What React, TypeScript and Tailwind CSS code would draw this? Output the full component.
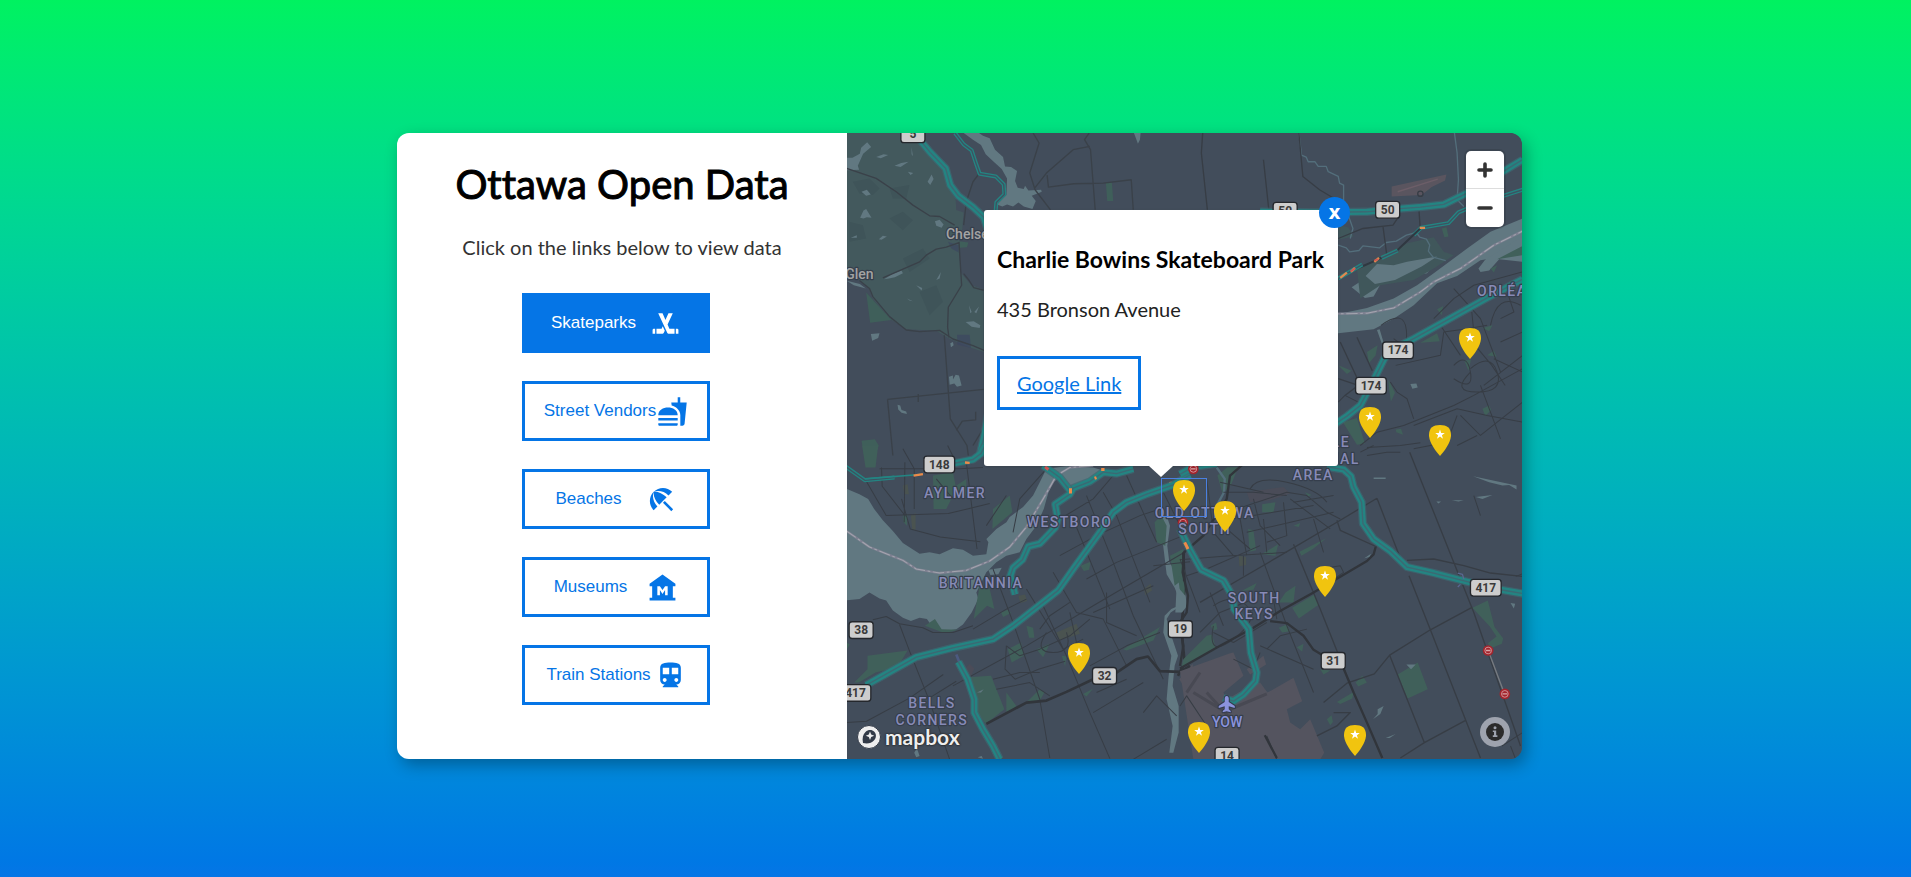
import { useState } from "react";
import type { ReactNode } from "react";
import type { IconType } from "react-icons";
import {
  MdBeachAccess,
  MdDirectionsTransit,
  MdFastfood,
  MdMuseum,
  MdSportsHockey,
} from "react-icons/md";

type Category = { name: string; Icon: IconType; gap: string };

const categories: Category[] = [
  { name: "Skateparks", Icon: MdSportsHockey, gap: "gap-3.5" },
  { name: "Street Vendors", Icon: MdFastfood, gap: "gap-px" },
  { name: "Beaches", Icon: MdBeachAccess, gap: "gap-6" },
  { name: "Museums", Icon: MdMuseum, gap: "gap-5" },
  { name: "Train Stations", Icon: MdDirectionsTransit, gap: "gap-1" },
];

// Pin positions on the map: horizontal centre and top edge.
const pins = [
  { x: 623, y: 194 },
  { x: 523, y: 273 },
  { x: 593, y: 291 },
  { x: 232, y: 509 },
  { x: 337, y: 346, selected: true },
  { x: 378, y: 367 },
  { x: 478, y: 432 },
  { x: 352, y: 588 },
  { x: 508, y: 591 },
];

const shields = [
  { x: 199, y: 4, t: "5" },
  { x: 1314, y: 233, t: "50" },
  { x: 1621, y: 230, t: "50" },
  { x: 1652, y: 651, t: "174" },
  { x: 1571, y: 757, t: "174" },
  { x: 278, y: 993, t: "148" },
  { x: 44, y: 1489, t: "38" },
  { x: 27, y: 1677, t: "417" },
  { x: 773, y: 1626, t: "32" },
  { x: 1000, y: 1486, t: "19" },
  { x: 1458, y: 1581, t: "31" },
  { x: 1915, y: 1362, t: "417" },
  { x: 1140, y: 1865, t: "14" },
];

const districts = [
  { x: 325, y: 1094, t: "AYLMER" },
  { x: 668, y: 1181, t: "WESTBORO" },
  { x: 403, y: 1364, t: "BRITANNIA" },
  { x: 256, y: 1723, t: "BELLS" },
  { x: 256, y: 1773, t: "CORNERS" },
  { x: 1073, y: 1152, t: "OLD OTTAWA" },
  { x: 1073, y: 1202, t: "SOUTH" },
  { x: 1221, y: 1407, t: "SOUTH" },
  { x: 1221, y: 1457, t: "KEYS" },
  { x: 1398, y: 940, t: "CYRVILLE" },
  { x: 1398, y: 990, t: "INDUSTRIAL" },
  { x: 1398, y: 1040, t: "AREA" },
  { x: 1996, y: 488, t: "ORLÉANS" },
];

const closures = [
  [1039, 1006],
  [1008, 1167],
  [1922, 1550],
  [1972, 1680],
];

function Highway({ d }: { d: string }) {
  return (
    <g>
      <path d={d} stroke="#3d6872" strokeWidth="25" opacity="0.7" />
      <path d={d} stroke="#248482" strokeWidth="18" />
      <path d={d} stroke="#3c6973" strokeWidth="4" />
    </g>
  );
}

function Parkway({ d }: { d: string }) {
  return (
    <g>
      <path d={d} stroke="#248482" strokeWidth="12" />
      <path d={d} stroke="#3d5361" strokeWidth="4" />
    </g>
  );
}

function CityMap() {
  return (
    <svg
      viewBox="0 0 2025 1875"
      preserveAspectRatio="xMidYMid slice"
      className="absolute inset-0 size-full"
      role="img"
      aria-label="Map of Ottawa"
      fill="none"
      strokeLinejoin="round"
    >
      <rect width="2025" height="1875" fill="#424d5b" />

      {/* North-west: hills and lakes */}
      <g transform="translate(-21 -24)">
        <path
          fill="#43595d"
          d="M21 24H240L262 70 318 130 335 200 348 222 350 255 372 262 368 310 358 350 362 440 395 480 432 492V680L385 664 330 640 290 616 200 612 150 580 100 520 88 490 60 466 21 450Z"
        />
        <path
          fill="#3f5459"
          d="M40 170l50-10 30 30-20 20-40-5zM150 280l40-20 30 25-30 30zM30 290l40 10 10 40-50 10zM190 400l60-30 20 30-60 40zM240 500l50-20 20 50-40 40zM150 190l60-10-10 40-40 0z"
        />
        <path fill="#3f5f5a" d="M80 502L155 584 92 592ZM66 946l40-5 12 20-12 29H74zM358 348l28 4-4 14-22 2zM798 172h18l4 56h-18z" />
        <path fill="#3c4560" d="M352 628h38l4 40-40-10zM325 350l32 10v22l-22-12z" opacity="0.6" />
        <path
          fill="#617881"
          d="M21 98l18 0 22-12 4-18 18-16 12 14-24 20-8 18-8 18 4 12-38 2zM110 96l22-8 14 2-22 10zM165 122l20-8 22-4-24 16zM205 140l16 4-8 6zM264 170l12-22 6 14-10 18zM216 66l4 28-4-6zM66 200l16-6 12 14-14 4zM62 278l10-22 8-4 16 26-14-2-10 4zM286 288l14-4 12 14-6 10-16-6zM34 338l18-8 0 8zM118 342l12-10 12 2-16 10zM134 462l24-16 28-10 4 8-24 12-18 4zM290 464l14-24-4 20zM230 480l18 8-2 8zM202 520l18 8-10-2zM21 466l40 10 18 14-36-10zM94 626l26-2-4 14-18 8zM332 654l8-4 2 10-8 6zM328 754l12-4 0 12 8-14 10 2 8 30-14 4-8-10-14 4zM174 838l8 2 4 14 14 4 2 8-16-4-10-10zM378 590l24-2 20 12-2 8-24-4zM388 540l8 20-4 4zM404 560l14-16-8 20z"
        />
        <path
          fill="#617881"
          d="M372 24L400 44 424 60 438 88 462 110 486 132 502 160 500 210 472 238 488 244 502 238 520 244 536 232 552 244 578 252 588 228 576 212 606 200 604 194 566 196 556 182 552 192 534 188 526 168 532 138 514 126 496 124 490 96 466 74 450 40 430 32 418 24ZM882 24h20l-2 20-6 12-6-16z"
        />
        <g stroke="#3a4149" strokeWidth="4">
          <path d="M21 130L110 160 170 200 220 240 270 272 300 274 345 300M358 352L320 366 290 372 260 390 240 410 130 458M358 350l8 130-40 66-2 60 4 30M314 630l10 140 8 110 50 80 4 30M144 822L432 792M144 822l16 168M236 806v24M372 300l8-70 20-60 18-24M372 445l16 20 14 22 30 8M60 466l30 24 10 24 50 60 50 40 40 5 60-4 40 26 60 20 42 18M350 915l18-28 40-4 0-24M400 960l30-50" />
          <path d="M580 24l18 30-28 90 16 50 46 60M750 64l-50 10-80 70-36 46M622 150l4 36 76-10 88-2 84-10 6 90M748 24l-14 20 18 30 14 180" />
        </g>
        <Highway d="M240 44L272 82 318 130 332 180 356 212 400 246 432 276 446 320 446 860 434 930 420 990" />
        <Parkway d="M346 24L372 58 396 76 410 118 420 146 468 154 492 178 494 208 470 232 468 256" />
      </g>

      {/* North-east: river, Orléans */}
      <g transform="translate(999 -24)">
        <path
          fill="#617881"
          d="M440 590L474 566 560 548 640 520 710 480 760 444 860 370 930 320 1026 280V370L990 390 900 405 830 452 770 474 700 540 640 580 580 612 474 624 440 626ZM514 486l46-30 30-40 50 4 60-8 80-18-40 50-100 20-40 14-20 36-26 4z"
        />
        <path fill="#617881" d="M894 430l20-26 112-70v76l-70-8-30 34-26 4zM690 776l18-2 4 12-16 4zM590 614l8-2 12 40-6 2z" />
        <path fill="#40575b" d="M530 430L600 392 680 354 760 336 790 380 820 390 760 430 700 464 600 480 540 520ZM474 300l30 6 16 28-46 10z" />
        <path fill="#617881" d="M556 452l34-36 50 4 40-10 90-16-46 30-80 40-60 12z" />
        <path fill="#40605a" d="M720 652l50-28 8 24zM560 680l32-20-6 30-20 24zM488 890l42-12 24 76-24 4zM474 720l40 16-14 10zM626 790l-2-28 20 40-12 26zM920 690l20-14 8 18zM852 706l20-4-8 34zM906 608l30-8-10 18zM770 552l18-10-4 28zM646 912l16-2 6 18-20-8zM930 430l20-10-10 22zM950 402l76-40v28zM784 310l14-4 6 28-12 2zM906 850l20-10 6 14-18 18z" />
        <path fill="#5a555f" d="M634 184l164-36-4 18-40 20-30 24-90 4z" />
        <path stroke="#6c5e68" strokeWidth="4" d="M652 200l120-38" />
        <g stroke="#536e7b" strokeWidth="4">
          <path d="M356 24l8 66 14 6 6 14 20 0 10 14 24 0 6 16 30 14 4 20 12 6 0 50M474 360l24 8 10 12 28-4 12-14 50 6 20-16 30-4 30-18 30-8 10 14 20 6 10 18-4 18 14 18 38 10M474 260l30 10 14 40-8 30M822 24l8 60 4 80-4 60 20 20" />
        </g>
        <path d="M440 566L560 564 640 548 720 500 760 470 840 430 940 360 1026 318" stroke="#7e8091" strokeWidth="7" />
        <path d="M440 566L560 564 640 548 720 500 760 470 840 430 940 360 1026 318" stroke="#a3a5ae" strokeWidth="3" strokeDasharray="34 8 8 8" />
        <g stroke="#373d45" strokeWidth="4">
          <path d="M68 24l-4 60 18 170M250 104l16 150M356 24l12 130 50 40 50 30M474 340l74-30 90-10 20-30M608 304l12 90M716 258l4 60M480 650l70 150M530 636l46 100M474 760l60 20-40 30" />
          <path
            strokeWidth="3"
            d="M602 600q70-50 76 14T640 640M646 720L780 690 790 620 860 610 920 600M630 770l20 30 30 20 20 60M474 830l20-20 40 20M540 960l50-40 80-20 150-60 60-30 146-80M700 970l100-20 30-80M700 900l130-50 90 20 106 20M760 580l60-60 60-40 146-40M820 490l80 90 60 160M874 560l10 100 50 60 40 60M930 600q20-100 90-60M820 720q40-40 50 20t-50 20M870 730q60-50 80 10t-60 60-20-60M840 870l60 60 50-40 76-60M900 780l60 160M560 966l100-6 60-8M960 650l66-30M940 700l86 40M780 600l60 90M910 780l116-90M980 500l20 60-40 20"
          />
          <path d="M712 206a8 8 0 1 0 16 0 8 8 0 1 0-16 0" />
        </g>
        <Highway d="M240 260L400 262 560 260 640 252 720 246 790 238 860 204 910 174 960 144 1026 104" />
        <Parkway d="M700 330L722 308 804 294 834 262 900 234 1026 194" />
        <path d="M470 462L540 426 590 404 650 376 722 308" stroke="#303841" strokeWidth="6" />
        <Parkway d="M604 398L652 376" />
        <Parkway d="M474 460L546 418" />
        <path d="M480 458l20-16M512 440l12-12M582 410l14-12M718 308h16" stroke="#e08a50" strokeWidth="7" />
        <path d="M512 438l12-8M582 406l12-4" stroke="#d15555" strokeWidth="5" />
        <Highway d="M440 912L500 872 540 840 572 780 612 700 640 670 700 640 920 518 1026 462" />
      </g>

      {/* South-west: Aylmer, Britannia, Bells Corners */}
      <g transform="translate(-21 936)">
        <path
          fill="#617881"
          d="M21 130L60 146 86 160 104 190 130 224 160 256 190 292 240 324 270 320 300 326 340 308 370 312 400 330 440 326 446 290 440 280 470 250 500 230 510 214 550 184 580 150 600 110 620 70 680 62 760 66 800 78 780 92 740 112 716 128 694 132 660 96 640 110 626 140 612 190 590 240 560 280 540 320 500 330 470 350 440 380 410 440 416 460 396 500 370 536 350 550 310 556 280 546 262 520 240 516 214 526 190 516 160 494 140 464 120 458 90 440 60 460 21 464Z"
        />
        <path fill="#617881" d="M446 372l40-6-10 20-24 2zM960 220l20-10 10 30-8 60 6 50 20 30 30 60v30l-46 30-12 20 14 50 20 60-10 30-6 60 18 60v80l-16 60h-12l10-80-18-80 6-70 8-60-24-70 4-50 20-20 30-14-20-50-24-40z" />
        <path
          fill="#40605a"
          d="M68 0h48l-8 66H78zM280 90l60-10 10 50-30 60-38 0zM460 190l50-40 8 50-60 50zM190 210l14-4-2 34-10-10zM350 120l30-20 0 50-26-4zM84 630l120-16-30 50-66 16-50 30-14 0 40-40zM420 420l30 10 14 60-22-10-40 40zM384 694l70-4 40 100-56 44-36-50zM504 610l40-20 8 40-36 20zM590 610l40-16-20 40zM560 540l20 6 4 30-16 0zM484 500l20-8 10 10-24 12zM722 360l30-12-4 24-16 4zM850 610l110-66-20 40-80 30zM560 770l40-40 14 10-14 24zM666 630l14 2-4 30zM730 744l30-16-20 24zM944 230l20-20 16 30-4 60-26-10zM990 330l40-20v90l-26 20zM500 740l30 40-30 24zM256 540l30-20 20 30 50 2-40 10zM21 590l10 6-10 16z"
        />
        <path fill="#4a5350" d="M650 560l60-26 10 30-60 20zM190 120l14-4 4 30-14 0zM214 210l14-8 0 50-10 0zM536 450l20-4 6 20-20 6zM912 430l20-16 4 20-20 14z" />
        <path fill="#54545f" d="M1018 700l40-46v110z" />
        <path fill="#4b4c58" d="M374 670l16-16 14 14-10 24z" />
        <path fill="#617881" d="M412 740l20-10-8 10zM224 920l8-14 8 24-10 4zM414 934l12-4 4 8z" />
        <g stroke="#373d45" strokeWidth="3">
          <path d="M126 66l2 56 70 90M80 106l60 104 186-6 124-30M190 10l34 60 0 120M186 160l26 90 90 24 120 14M380 50l32 260M290 100l50 60M120 70l240 0 70-4M324 0l30 60M500 150l-60 90M196 50l-2 180" />
          <path d="M100 522L140 512 180 534 250 546 280 560 340 560 400 540M180 536l30 80 60 150 60 174M21 740l70-20M21 830l60-4 130-70 100-70M340 720L560 600 760 480 1050 310M400 550l100-60 60-30M460 370L520 530 600 760 630 936M500 600l40 30 60-20 90-40 60-50M610 480l70 150 70 170 60 138M690 470l-60 40-30 40M560 430l110 180 60-30M500 600l-4 70 30 30 70-30 80-24M640 380l70 120 80 20 30 60 40 80M700 220l110 270M740 150l80 200 60 160 90 190M790 140l40 70 100 260M860 90l90 200M660 220l100-60 60-70M660 330l110-60 130-60 60-20M740 400l90-50 200-80M760 500l180-80M750 660l110-60 100-40M770 740l90-40M760 800l100-60 50-30M910 800l40-50 60 60M460 700l80-20 60 0M880 940l100-60M270 756l80-50M470 730l100-20 60 40M940 360l110-12M960 120l90 180" />
          <path d="M620 560q-40 60 20 60t40-60M690 500l20 90M800 440l0 90 90 40M620 70l-80 90-20 100" />
        </g>
        <path d="M440 834L560 770 620 764 680 738 760 700 830 680 890 640 924 632 960 676 1020 678 1050 660M1030 320l4 110-10 120 10 100-20 40" stroke="#31353b" strokeWidth="8" />
        <path d="M21 256L90 304 190 344 230 370 300 382 380 374 450 346 510 304 560 244 610 160 650 90 690 66 760 60" stroke="#7e8091" strokeWidth="7" />
        <path d="M21 256L90 304 190 344 230 370 300 382 380 374 450 346 510 304 560 244 610 160 650 90 690 66 760 60" stroke="#a3a5ae" strokeWidth="3" strokeDasharray="34 8 8 8" />
        <Parkway d="M14 60L76 104 165 96" />
        <path d="M76 100L250 86" stroke="#248482" strokeWidth="5" />
        <Highway d="M340 54L400 42 424 24 436 0" />
        <path d="M222 90l28-4M376 51l14 1" stroke="#ed8a49" strokeWidth="7" />
        <Highway d="M526 446L512 390 520 366 548 342 566 302 600 294 646 246 654 220 646 176 690 146 700 128 750 108 790 80 830 84 880 70" />
        <Highway d="M610 60L660 96 690 134" />
        <path d="M616 64l10 8" stroke="#d15555" strokeWidth="9" />
        <path d="M692 128v16M764 98l6-2M784 72h10M778 266l12-16M988 114l10-2M1036 290l8 20" stroke="#ed8a49" strokeWidth="9" />
        <Highway d="M80 718L230 634 340 606 460 580 520 540 655 434 700 370 780 260 820 200 860 170 920 146 1000 118 1050 88" />
        <path d="M350 626l20 50" stroke="#4c5a80" strokeWidth="8" />
        <Highway d="M356 648L384 700 404 760 404 800 430 850 460 900 480 940" />
      </g>

      {/* South-east: South Keys, airport */}
      <g transform="translate(999 936)">
        <path fill="#54545f" d="M0 676L150 622 160 620 190 690 130 740 140 760 210 720 240 710 262 740 340 696 366 766 320 790 330 830 360 850 390 820 432 920 420 940H40ZM200 670l50-40 8 26-48 30z" />
        <path fill="#4a4c58" d="M200 140l110-16 20 20-60 20-60 6z" />
        <path
          fill="#40605a"
          d="M112 90l30-25 32 0-20 50-26 30zM246 176l40-6-6 30-34 0zM336 486l66-40 14 30-60 42zM358 318l80-40-40 32-34 20zM204 250l16 4 8 60-20 4zM244 326l50-30-8 34zM10 640l70-70 16-4 12 44-104 56zM652 686l60-36 30 80-60 28zM876 486l46-22 20 80 26 34-4 16-34 14-8-16 26-20-20-30zM470 768l50-30-4 20-36 16zM526 710l20-20 14 20-26 12zM440 820l14-12 4 20-8 10zM296 546l24-10 10 20-24 4zM350 604l20-10-4 24zM296 470l20-30 30-20-6 50zM184 436l46-24-10 20zM92 540l16-10 4 20-12 4zM340 240l20-8-4 12zM374 140l20 8-10 4zM420 670l30 4-20 12zM-6 390l20 20 0 50-14-20z"
        />
        <path fill="#4a5350" d="M176 330l22 4 0 24-20 4z" />
        <path fill="#617881" d="M-10 420l26 30 6 30-16 20-20 0zM580 96h36v4h-36zM878 92l130 28 0 12-22-14-20 2-40-10zM886 154l50-6-30 12zM814 164l36 0-16 4zM768 168h14l-8 6zM678 656l28 0-14 14zM578 820l14-16 0-14 18-10-10 24zM616 876l30-12-18 12zM990 472l14 2-4 14zM552 338l20-14-4 10z" />
        <path d="M110 66L134 100 132 140 110 180" stroke="#536e7b" strokeWidth="7" />
        <path d="M40 740L140 800M150 790l110-46M60 680l-40 60M80 740l100 110" stroke="#484953" strokeWidth="9" />
        <g stroke="#373d45" strokeWidth="3">
          <path
            strokeWidth="4"
            d="M590 158L480 224 300 330 180 400 60 470M590 158l70 180M688 20L760 200 880 500 1020 900M470 224l10 30 110 50M680 344l80-4 90 20 80 22 96 10M686 390L750 552 900 936M876 484L750 552 628 628 582 684 500 712 430 770M628 628L732 890 660 936M732 890L854 824M340 296L420 490 496 680M410 870l60-30 40-40-50 0"
          />
          <path d="M0 342L130 332 320 320M20 390l60-20 160-70M240 320L320 540 400 740M100 560l60 30 100-60M90 440l40 100M220 160l20 80 60 60M140 200l180-60 60 10 60 50 40 20M120 110l130 30M210 130q20-40 110-20t120 60M330 160l120 90M310 170l10 100-60 20M220 210l180-30M200 260l260-60M140 250l70 60M180 220l20 110M400 220l30 100M250 220l10 100M60 560l60-60 100-40M160 640l60 30 20-50M380 550l-80 20-40 40M0 340l60 160M280 460l10 60M460 150l-120 20M540 20l40-20M560 30l60-10 40 0M830 0l60-30M80 100l20 160 60 70M420 370l60-10 10 20-30 20M0 780l20-30 60 90M260 870l30 70M100 480q60-40 100 0T160 580t-60-40M880 150l20 60M1006 392l20-8M964 900l62-40M990 900l14 36" />
          <path d="M130 140l90 0 100 10M190 330l0 60M240 600l160 70" />
        </g>
        <path d="M0 668L120 600 220 546 300 496 400 440 560 346 580 326 586 304M270 526L320 532 370 570 400 612 420 624 490 668 520 740 560 830 606 936M150 90l46-40M150 88L140 160 70 270 12 320 8 380 24 450 20 500 0 530 10 600 0 660M254 868l36 68" stroke="#31353b" strokeWidth="7" />
        <Highway d="M440 64L490 72 512 92 520 124 544 170 548 234 580 280 630 316 680 364 760 382 860 408 960 432 1030 444" />
        <Highway d="M0 86L40 64 110 54" />
        <Highway d="M0 250L30 312 64 372 130 404 158 452 162 490 206 550 212 620 230 680 226 706 190 746 160 766 130 756" />
        <path d="M14 290l10 20" stroke="#ed8a49" strokeWidth="9" />
        <path d="M832 382l14 4 4 14M832 424l8-8" stroke="#5a6790" strokeWidth="4" />
        <path d="M924 616L972 744" stroke="#777b80" strokeWidth="4" />
        <path
          d="M140 750c-4 0-6 4-6 8v10l-18 12v6l18-5v9l-6 5v4l12-3 12 3v-4l-6-5v-9l18 5v-6l-18-12v-10c0-4-2-8-6-8z"
          fill="#8b93dc"
          stroke="#333b4c"
          strokeWidth="6"
          paintOrder="stroke"
        />
      </g>

      {closures.map(([x, y]) => (
        <g key={`${x}-${y}`} transform={`translate(${x} ${y})`}>
          <circle r="16" fill="#a3242c" />
          <circle r="10" stroke="#d8a5a8" strokeWidth="2.5" />
          <path d="M-7 0H7" stroke="#d8a5a8" strokeWidth="4" />
        </g>
      ))}

      {shields.map(({ x, y, t }) => {
        const half = t.length === 3 ? 46 : 36;
        return (
          <g key={`${x}-${y}`} className="font-['Roboto',sans-serif] text-[36px] font-bold">
            <rect x={x - half} y={y - 25} width={half * 2} height="50" rx="9" fill="#cdcdcd" stroke="#24272c" strokeWidth="4" />
            <text x={x} y={y + 12} textAnchor="middle" fill="#3a3a3a">
              {t}
            </text>
          </g>
        );
      })}

      <g
        className="font-['Roboto',sans-serif] text-[42px] font-medium tracking-widest"
        textAnchor="middle"
        fill="#878ab6"
        stroke="#353e4c"
        strokeWidth="7"
        paintOrder="stroke"
      >
        {districts.map(({ x, y, t }) => (
          <text key={`${t}-${y}`} x={x} y={y}>
            {t}
          </text>
        ))}
      </g>
      <g className="font-['Roboto',sans-serif] text-[42px] font-medium" stroke="#353e4c" strokeWidth="7" paintOrder="stroke">
        <text x="298" y="316" fill="#a3a3a3">
          Chelsea
        </text>
        <text x="-4" y="438" fill="#a3a3a3">
          Glen
        </text>
        <text x="1140" y="1780" textAnchor="middle" fill="#8b93dc">
          YOW
        </text>
      </g>
    </svg>
  );
}

function Pin() {
  return (
    <svg viewBox="0 0 22 31" className="h-[31px] w-[22px]" aria-hidden="true">
      <path d="M11 31C7.500 27 .6 18.500 0 11 -.3 3.500 3.500 0 11 0s11.300 3.500 11 11c-.6 7.500-7.500 16-11 20z" fill="#f1c40f" />
      <path d="M11 4.600l1.200 3.300 3.600.1-2.900 2.200 1.100 3.500-3-2.100-3 2.100 1.100-3.500-2.900-2.200 3.600-.1z" fill="#fff" />
    </svg>
  );
}

function MapButton({ label, children }: { label: string; children: ReactNode }) {
  return (
    <button type="button" aria-label={label} className="flex h-[38px] w-[38px] items-center justify-center">
      {children}
    </button>
  );
}

function Popup({ onClose }: { onClose: () => void }) {
  return (
    <div className="absolute top-[77px] left-[137px] flex w-[354px] flex-col items-center">
      <div className="relative h-64 w-full rounded-[3px] bg-white px-[13px] pt-[35px] shadow-sm">
        <button
          type="button"
          onClick={onClose}
          className="absolute -top-[13px] -right-3 flex size-[31px] items-center justify-center rounded-full bg-[#0575e6] font-['Open_Sans',sans-serif] text-base font-extrabold text-white"
        >
          X
        </button>
        <h2 className="text-[23px] leading-7 font-bold whitespace-nowrap text-black">Charlie Bowins Skateboard Park</h2>
        <p className="mt-[22px] text-xl leading-7 text-[#222]">435 Bronson Avenue</p>
        <a
          href="#google"
          className="mt-[33px] inline-block border-3 border-[#0575e6] px-[17px] py-3 text-xl leading-6 text-[#0575e6] underline"
        >
          Google Link
        </a>
      </div>
      <div className="h-[11px] w-6 bg-white [clip-path:polygon(0_0,100%_0,50%_100%)]" />
    </div>
  );
}

export default function App() {
  const [active, setActive] = useState("Skateparks");
  const [open, setOpen] = useState(true);

  return (
    <div className="min-h-screen bg-linear-to-b from-[#00f260] to-[#0575e6] pt-[133px] pb-[118px] pl-2 font-['Lato',sans-serif] [font-variant-ligatures:none]">
      <main className="mx-auto flex w-full max-w-[1125px] overflow-hidden rounded-xl shadow-[4px_6px_16px_rgba(0,0,0,0.3)]">
        <section className="flex w-2/5 flex-col items-center bg-white pt-[26px] pb-[54px]">
          <h1 className="text-[40px] leading-[50px] font-normal text-black [-webkit-text-stroke:1px]">Ottawa Open Data</h1>
          <p className="mt-6 text-xl leading-7 text-[#333]">Click on the links below to view data</p>
          <nav aria-label="Datasets" className="mt-8 flex flex-col gap-7 pr-3">
            {categories.map(({ name, Icon, gap }) => (
              <button
                key={name}
                type="button"
                onClick={() => setActive(name)}
                className={`flex h-[60px] w-[188px] items-center justify-center border-3 border-[#0575e6] font-['Liberation_Sans',sans-serif] text-[17px] whitespace-nowrap ${gap} ${
                  active === name ? "bg-[#0575e6] text-white" : "bg-white text-[#0575e6]"
                }`}
              >
                {name}
                <Icon className="size-[31px] shrink-0" aria-hidden="true" />
              </button>
            ))}
          </nav>
        </section>

        <section aria-label="Map" className="relative w-3/5 overflow-hidden bg-[#424d5b]">
          <CityMap />

          {pins.map(({ x, y, selected }) => (
            <button
              key={`${x}-${y}`}
              type="button"
              aria-label="Skatepark"
              onClick={() => setOpen(true)}
              className={`absolute flex h-[39px] w-[46px] -translate-x-1/2 items-start justify-center border pt-px ${
                selected ? "border-[#4a80e0]" : "border-transparent"
              }`}
              style={{ left: x, top: y - 1 }}
            >
              <Pin />
            </button>
          ))}

          {open && <Popup onClose={() => setOpen(false)} />}

          <div className="absolute top-[18px] right-[18px] divide-y divide-[#ddd] rounded-[5px] bg-white shadow-[0_0_0_2px_rgba(0,0,0,0.1)]">
            <MapButton label="Zoom in">
              <svg viewBox="0 0 16 16" className="size-4" stroke="#333" strokeWidth="3.600" strokeLinecap="round" aria-hidden="true">
                <path d="M2 8h12M8 2v12" />
              </svg>
            </MapButton>
            <MapButton label="Zoom out">
              <svg viewBox="0 0 16 16" className="size-4" stroke="#333" strokeWidth="3.600" strokeLinecap="round" aria-hidden="true">
                <path d="M2 8h12" />
              </svg>
            </MapButton>
          </div>

          <a
            href="#mapbox"
            className="absolute bottom-2.5 left-2.5 flex items-center gap-1 text-[21px] leading-6 font-bold text-[#eee] [text-shadow:0_0_2px_#222,0_0_2px_#222]"
          >
            <svg viewBox="0 0 24 24" className="size-6" aria-hidden="true">
              <circle cx="12" cy="12" r="11.500" fill="#eee" stroke="#333b48" />
              <path d="M6 18c-1-5 0-8.500 2.500-11 2.600-2.500 6.500-2.600 8.800-.3s2.200 6.200-.4 8.800C14.500 18 11 19 6 18z" fill="#323a47" />
              <path d="M13 6.600l1.200 3 3 1.200-3 1.200-1.200 3-1.200-3-3-1.200 3-1.200z" fill="#eee" />
            </svg>
            mapbox
          </a>

          <button
            type="button"
            aria-label="Attribution"
            className="absolute right-3 bottom-3 flex size-[30px] items-center justify-center rounded-full bg-[#9ea3ae]"
          >
            <svg viewBox="0 0 18 18" className="size-[18px]" aria-hidden="true">
              <circle cx="9" cy="9" r="9" fill="#2b2b2b" />
              <circle cx="9" cy="4.700" r="1.500" fill="#9ea3ae" />
              <path d="M6.800 7.500h3.400v4.800h1.200v1.600H6.800v-1.600H8V9H6.800z" fill="#9ea3ae" />
            </svg>
          </button>
        </section>
      </main>
    </div>
  );
}
